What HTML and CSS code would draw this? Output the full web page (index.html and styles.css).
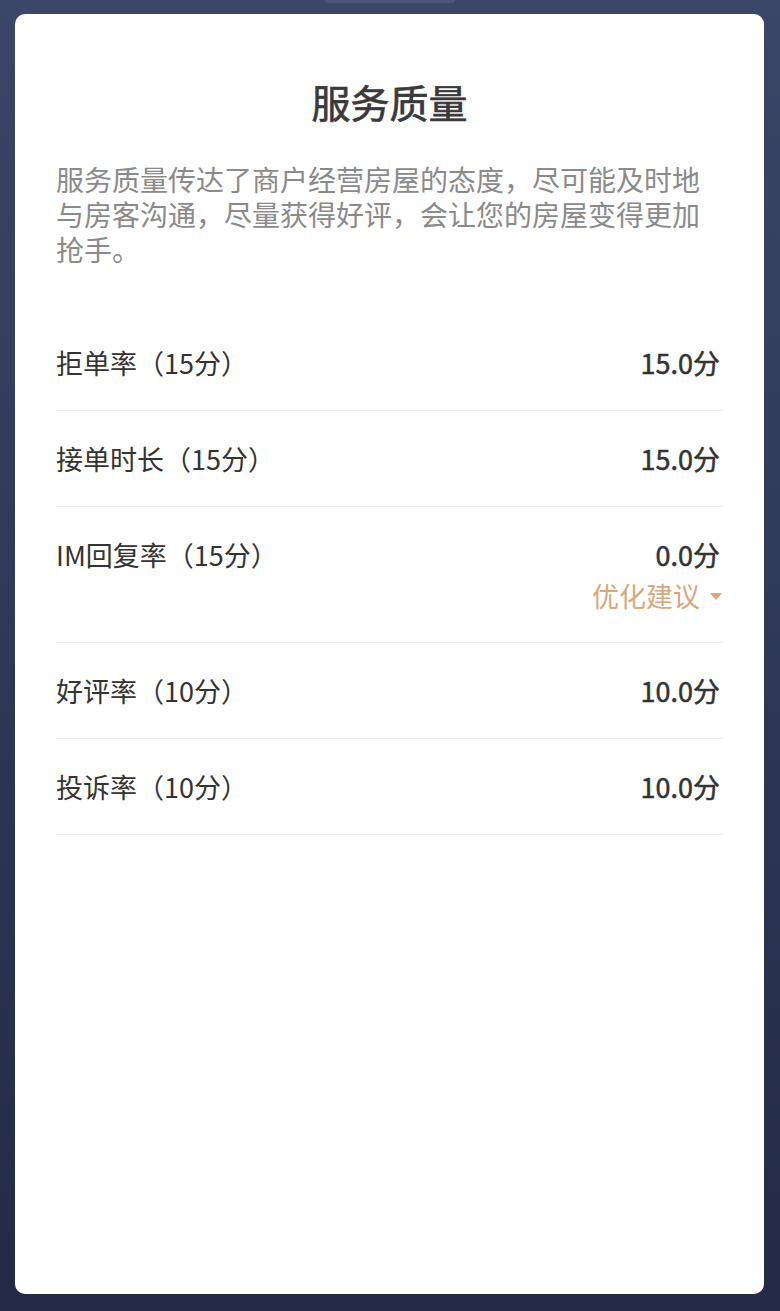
FILE: index.html
```html
<!DOCTYPE html>
<html lang="zh-CN">
<head>
  <meta charset="UTF-8">
  <meta name="viewport" content="width=device-width, initial-scale=1.0">
  <title>服务质量</title>
  <link rel="stylesheet" href="styles.css">
</head>
<body>
  <div class="tab"></div>
  <div class="card">
    <h1 class="title">服务质量</h1>
    <p class="desc">服务质量传达了商户经营房屋的态度，尽可能及时地与房客沟通，尽量获得好评，会让您的房屋变得更加抢手。</p>

    <div class="list">
      <div class="row">
        <span class="label">拒单率（15分）</span>
        <span class="value">15.0分</span>
      </div>
      <div class="row">
        <span class="label">接单时长（15分）</span>
        <span class="value">15.0分</span>
      </div>
      <div class="row tall">
        <span class="label">IM回复率（15分）</span>
        <div class="side">
          <span class="value">0.0分</span>
          <span class="advice">优化建议<i class="caret"></i></span>
        </div>
      </div>
      <div class="row">
        <span class="label">好评率（10分）</span>
        <span class="value">10.0分</span>
      </div>
      <div class="row">
        <span class="label">投诉率（10分）</span>
        <span class="value">10.0分</span>
      </div>
    </div>
  </div>
</body>
</html>
```

FILE: styles.css
```css
:root {
  --bg-top: #3b4668;
  --bg-bottom: #222a46;
  --text: #333333;
  --muted: #8a8a8a;
  --line: #ededed;
  --accent: #d6a97d;
}

* {
  margin: 0;
  padding: 0;
  box-sizing: border-box;
  font-family: "Noto Sans CJK SC", "Noto Sans", sans-serif;
}

body {
  height: 1311px;
  background: linear-gradient(var(--bg-top), var(--bg-bottom));
  display: flex;
  flex-direction: column;
  align-items: center;
  padding: 0 16px 17px 15px;
  overflow: hidden;
}

.tab {
  width: 130px;
  height: 3px;
  background-color: #4b5679;
  border-radius: 0 0 8px 8px;
  margin-bottom: 11px;
}

.card {
  width: 749px;
  flex: 1;
  align-self: flex-start;
  background-color: #fff;
  border-radius: 10px;
  padding: 63px 41px 0;
}

/* no medium cut of the CJK font, so thicken the regular one a little */
.title {
  font-size: 39px;
  font-weight: 400;
  -webkit-text-stroke: 0.7px #3a3a3a;
  line-height: 48px;
  text-align: center;
  color: #3a3a3a;
}

.desc {
  margin-top: 37px;
  font-size: 28px;
  line-height: 35px;
  color: var(--muted);
}

.list {
  margin-top: 48px;
}

.row {
  display: flex;
  justify-content: space-between;
  align-items: flex-start;
  padding: 30px 0 29px;
  border-bottom: 1px solid var(--line);
  line-height: 36px;
}

.row.tall {
  padding-bottom: 28px;
}

.label {
  font-size: 27px;
  color: var(--text);
}

.value {
  font-size: 27px;
  -webkit-text-stroke: 0.5px var(--text);
  color: var(--text);
  margin-right: 3px;
}

.side {
  display: flex;
  flex-direction: column;
  align-items: flex-end;
}

.advice {
  margin-top: 5px;
  font-size: 27px;
  color: var(--accent);
  display: flex;
  align-items: center;
}

.caret {
  width: 0;
  height: 0;
  margin: 0 1px 0 10px;
  border-left: 6px solid transparent;
  border-right: 6px solid transparent;
  border-top: 7px solid #e2a173;
}
```
